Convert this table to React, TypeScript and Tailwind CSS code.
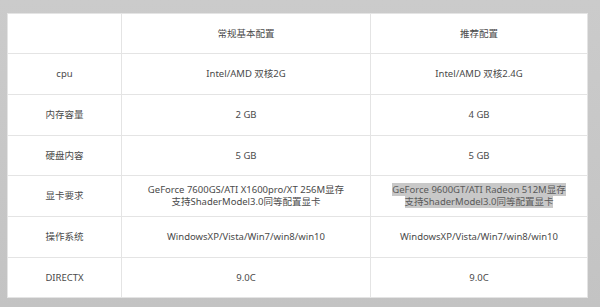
import React from 'react';

const rows = [
  { label: '', basic: ['常规基本配置'], rec: ['推荐配置'], h: 'h-[40px]' },
  { label: 'cpu', basic: ['Intel/AMD 双核2G'], rec: ['Intel/AMD 双核2.4G'], h: 'h-[41px]' },
  { label: '内存容量', basic: ['2 GB'], rec: ['4 GB'], h: 'h-[41px]' },
  { label: '硬盘内容', basic: ['5 GB'], rec: ['5 GB'], h: 'h-[40px]' },
  {
    label: '显卡要求',
    basic: ['GeForce 7600GS/ATI X1600pro/XT 256M显存', '支持ShaderModel3.0同等配置显卡'],
    rec: ['GeForce 9600GT/ATI Radeon 512M显存', '支持ShaderModel3.0同等配置显卡'],
    h: 'h-[41px]',
    selected: true,
  },
  { label: '操作系统', basic: ['WindowsXP/Vista/Win7/win8/win10'], rec: ['WindowsXP/Vista/Win7/win8/win10'], h: 'h-[41px]' },
  { label: 'DIRECTX', basic: ['9.0C'], rec: ['9.0C'], h: 'h-[40px]' },
];

export default function App() {
  return (
    <div
      className="w-[600px] h-[307px] bg-gradient-to-b from-[#cbcbcb] to-[#c3c3c3] pt-[13px] pl-[7px] text-[9.5px] leading-[12px] text-[#4a4a4a]"
      style={{ fontFamily: '"Noto Sans", "Noto Sans CJK SC", sans-serif' }}
    >
      <table className="w-[581px] bg-white border-collapse table-fixed">
        <colgroup>
          <col className="w-[114px]" />
          <col className="w-[249px]" />
          <col />
        </colgroup>
        <tbody>
          {rows.map((r, i) => (
            <tr key={i} className={r.h}>
              <td className="border border-[#e4e4e4] text-center align-middle p-0">{r.label}</td>
              <td className="border border-[#e4e4e4] text-center align-middle p-0">
                {r.basic.map((t, j) => (
                  <div key={j}>{t}</div>
                ))}
              </td>
              <td className="border border-[#e4e4e4] text-center align-middle p-0">
                {r.rec.map((t, j) =>
                  r.selected ? (
                    <div key={j}>
                      <span className="bg-[#c8c8c8] text-[#5a5a5a]">{t}</span>
                    </div>
                  ) : (
                    <div key={j}>{t}</div>
                  )
                )}
              </td>
            </tr>
          ))}
        </tbody>
      </table>
    </div>
  );
}
